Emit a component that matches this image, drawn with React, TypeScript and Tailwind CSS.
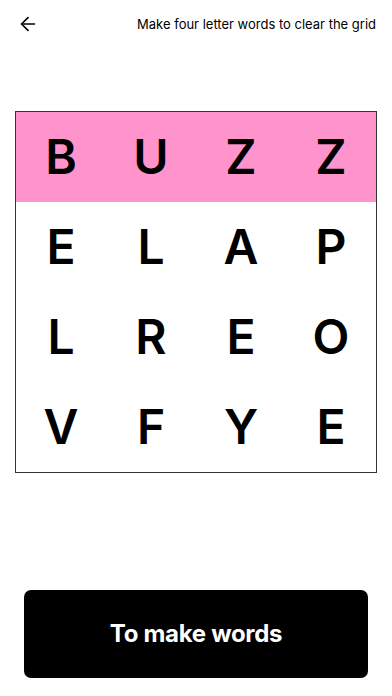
import { ArrowLeft } from "lucide-react";

const rows = [
    ["B", "U", "Z", "Z"],
    ["E", "L", "A", "P"],
    ["L", "R", "E", "O"],
    ["V", "F", "Y", "E"],
];

export default function App() {
    return (
        <div className="w-[392px] h-[696px] bg-white flex flex-col font-['Inter',sans-serif] text-black">
            <header className="h-12 flex items-center justify-between pl-[17px] pr-4">
                <ArrowLeft size={22} strokeWidth={1.8} />
                <span className="text-[13px] leading-none">Make four letter words to clear the grid</span>
            </header>

            <div className="mt-[63px] mx-[15px] border-[1.5px] border-[#333] grid grid-cols-4">
                {rows.map((row, r) =>
                    row.map((letter, c) => (
                        <div
                            key={`${r}-${c}`}
                            className={`h-[90px] flex items-center justify-center text-[48px] font-semibold leading-none ${r === 0 ? "bg-[#ff93cb]" : "bg-white"}`}
                        >
                            {letter}
                        </div>
                    ))
                )}
            </div>

            <button className="mt-auto mb-[18px] mx-[24px] h-[88px] bg-black text-white rounded-[7px] text-[24px] font-bold tracking-[-0.3px]">
                To make words
            </button>
        </div>
    );
}
